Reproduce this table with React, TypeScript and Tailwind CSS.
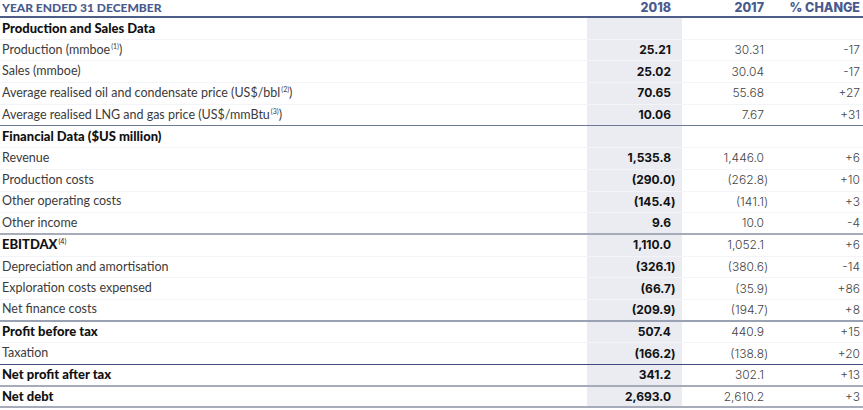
import type { ReactNode } from 'react'

type Row = {
  label: ReactNode
  bold?: boolean
  head?: boolean
  a?: string
  b?: string
  c?: string
  line?: string
}

const Sup = ({ n }: { n: number }) => (
  <sup className="relative -top-[5px] ml-[1px] text-[7px] font-normal leading-none">({n})</sup>
)

const rows: Row[] = [
  { label: 'Production and Sales Data', head: true },
  { label: <>Production (mmboe<Sup n={1} />)</>, a: '25.21', b: '30.31', c: '-17' },
  { label: 'Sales (mmboe)', a: '25.02', b: '30.04', c: '-17' },
  { label: <>Average realised oil and condensate price (US$/bbl<Sup n={2} />)</>, a: '70.65', b: '55.68', c: '+27' },
  { label: <>Average realised LNG and gas price (US$/mmBtu<Sup n={3} />)</>, a: '10.06', b: '7.67', c: '+31', line: 'border-b border-[#6d7895]' },
  { label: 'Financial Data ($US million)', head: true },
  { label: 'Revenue', a: '1,535.8', b: '1,446.0', c: '+6' },
  { label: 'Production costs', a: '(290.0)', b: '(262.8)', c: '+10' },
  { label: 'Other operating costs', a: '(145.4)', b: '(141.1)', c: '+3' },
  { label: 'Other income', a: '9.6', b: '10.0', c: '-4', line: 'border-b-2 border-[#a6acba]' },
  { label: <>EBITDAX<Sup n={4} /></>, bold: true, a: '1,110.0', b: '1,052.1', c: '+6' },
  { label: 'Depreciation and amortisation', a: '(326.1)', b: '(380.6)', c: '-14' },
  { label: 'Exploration costs expensed', a: '(66.7)', b: '(35.9)', c: '+86' },
  { label: 'Net finance costs', a: '(209.9)', b: '(194.7)', c: '+8', line: 'border-b-2 border-[#9aa1b3]' },
  { label: 'Profit before tax', bold: true, a: '507.4', b: '440.9', c: '+15' },
  { label: 'Taxation', a: '(166.2)', b: '(138.8)', c: '+20', line: 'border-b border-[#3f4c7c]' },
  { label: 'Net profit after tax', bold: true, a: '341.2', b: '302.1', c: '+13', line: 'border-b-2 border-[#a6acba]' },
  { label: 'Net debt', bold: true, a: '2,693.0', b: '2,610.2', c: '+3', line: 'border-b-2 border-[#a6acba]' },
]

// negative figures: closing bracket hangs past the column edge
function Num({ v }: { v?: string }) {
  if (!v) return null
  if (v.endsWith(')')) {
    return (
      <>
        {v.slice(0, -1)}
        <span className="inline-block w-0">)</span>
      </>
    )
  }
  return <>{v}</>
}

export default function App() {
  return (
    <div className="h-[410px] w-[863px] overflow-hidden bg-white">
      <div className="grid h-[18px] grid-cols-[587px_95px_93px_85px] items-center border-b-2 border-[#4e5c88] pr-[3px] text-[12.5px] font-extrabold leading-none text-[#4a5a8c]">
        <div className="pl-[2px] font-['Lato',sans-serif] text-[12px] font-black">YEAR ENDED 31 DECEMBER</div>
        <div className="pr-[11px] text-right font-['Inter',sans-serif]">2018</div>
        <div className="pr-[11px] text-right font-['Inter',sans-serif]">2017</div>
        <div className="text-right font-['Inter',sans-serif]">% CHANGE</div>
      </div>
      {rows.map((r, i) => (
        <div
          key={i}
          className={`grid h-[21.7px] grid-cols-[587px_95px_93px_85px] pr-[3px] ${r.line ?? 'border-b border-[#f3f4f7]'}`}
        >
          <div
            className={`flex items-center pl-[2px] font-['Lato',sans-serif] ${
              r.head || r.bold ? 'text-[13px] font-black text-[#111]' : 'text-[12.5px] text-[#3b3b3b]'
            }`}
          >
            <span>{r.label}</span>
          </div>
          <div className="flex items-center justify-end bg-[#eaecf2] pr-[11px] font-['Inter',sans-serif] text-[12px] font-bold text-[#111]">
            <span><Num v={r.a} /></span>
          </div>
          <div className="flex items-center justify-end pr-[11px] font-['Inter',sans-serif] text-[12px] font-light text-[#444]">
            <span><Num v={r.b} /></span>
          </div>
          <div className="flex items-center justify-end font-['Inter',sans-serif] text-[12px] font-light text-[#444]">
            {r.c}
          </div>
        </div>
      ))}
    </div>
  )
}
